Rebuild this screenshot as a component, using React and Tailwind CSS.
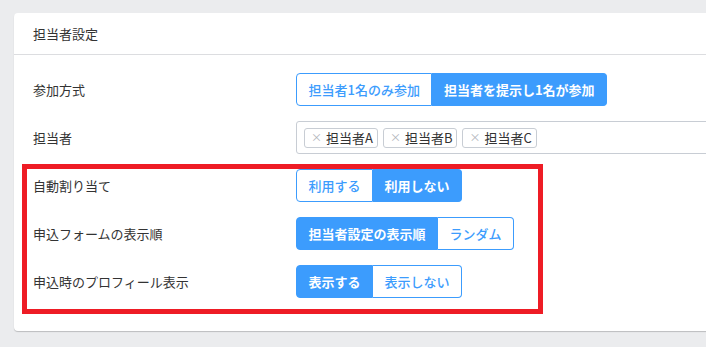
import React from "react";

const font = { fontFamily: '"Noto Sans CJK JP", "Noto Sans", sans-serif' };

function Seg({ items, active }) {
  return (
    <div className="flex h-[33px]">
      {items.map((t, i) => {
        const on = i === active;
        const first = i === 0;
        const last = i === items.length - 1;
        return (
          <div
            key={t}
            className={
              "flex items-center px-[11.5px] text-[13px] border border-[#3c9cfd] " +
              (on ? "bg-[#3c9cfd] text-white font-bold " : "bg-white text-[#3c9cfd] font-medium ") +
              (first ? "rounded-l-[4px] " : "") +
              (last ? "rounded-r-[4px] " : "") +
              (!first ? "border-l-0 " : "")
            }
          >
            {t}
          </div>
        );
      })}
    </div>
  );
}

function Row({ label, children }) {
  return (
    <div className="flex items-center h-[33px]">
      <div className="w-[263px] shrink-0 text-[13px] text-[#333]">{label}</div>
      {children}
    </div>
  );
}

function Tag({ t }) {
  return (
    <div className="flex items-center h-[20px] pl-[6px] pr-[4px] gap-[4px] border border-[#c8cdd4] rounded-[3px] text-[13px] text-[#333]">
      <span className="text-[#b0b4ba] text-[11px]">×</span>
      <span>{t}</span>
    </div>
  );
}

export default function App() {
  return (
    <div className="w-[706px] h-[347px] bg-[#ebecee] pt-[13px] pl-[14px] overflow-hidden relative" style={font}>
      <div className="w-[720px] bg-white rounded-[4px] shadow-[0_1px_1px_rgba(0,0,0,0.2)]">
        <div className="h-[42px] flex items-center px-[19px] text-[13px] text-[#333] border-b border-[#dcdde0]">
          担当者設定
        </div>
        <div className="pt-[18px] pb-[33px] px-[19px] flex flex-col gap-[15px]">
          <Row label="参加方式">
            <Seg items={["担当者1名のみ参加", "担当者を提示し1名が参加"]} active={1} />
          </Row>
          <Row label="担当者">
            <div className="flex-1 h-[33px] border border-[#c8cdd4] rounded-[3px] flex items-center pl-[7px] gap-[5px]">
              <Tag t="担当者A" />
              <Tag t="担当者B" />
              <Tag t="担当者C" />
            </div>
          </Row>
          <Row label="自動割り当て">
            <Seg items={["利用する", "利用しない"]} active={1} />
          </Row>
          <Row label="申込フォームの表示順">
            <Seg items={["担当者設定の表示順", "ランダム"]} active={0} />
          </Row>
          <Row label="申込時のプロフィール表示">
            <Seg items={["表示する", "表示しない"]} active={0} />
          </Row>
        </div>
      </div>
      <div className="absolute left-[22px] top-[164px] w-[521px] h-[150px] border-[5px] border-[#ee1c25]" />
    </div>
  );
}
